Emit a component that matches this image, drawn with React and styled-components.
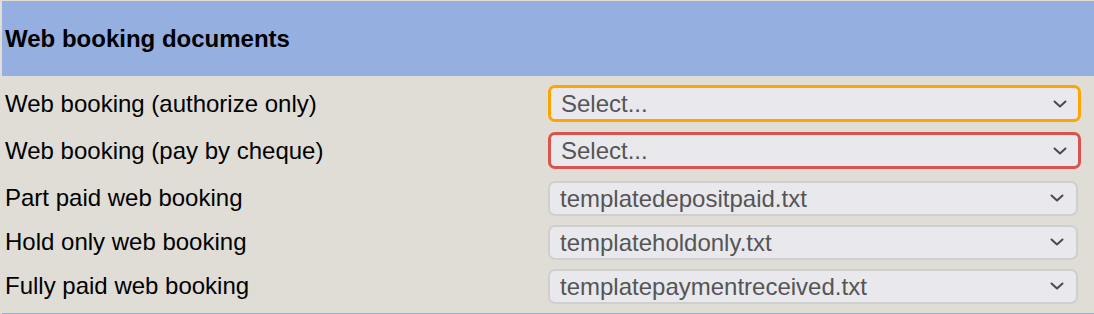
import React from 'react';
import styled, { createGlobalStyle } from 'styled-components';

const GlobalStyle = createGlobalStyle`
body {
    margin: 0;
    background: #dfddd6;
    font-family: "Liberation Sans", Arial, sans-serif;
}
`;

const Page = styled.div`
width: 1094px;
height: 314px;
padding: 1px 0 0 2px;
box-sizing: border-box;
background: #dfddd6;
overflow: hidden;
`;

const Header = styled.div`
height: 75px;
display: flex;
align-items: center;
padding-left: 3px;
background: #95afe0;
font-size: 24px;
font-weight: bold;
color: #000;
`;

const Rows = styled.div`
padding: 4px 0 5px;
`;

const Row = styled.div`
display: grid;
grid-template-columns: 546px 1fr;
align-items: center;
height: ${p => (p.$tall ? '47px' : '44px')};
margin-top: ${p => (p.$shift ? '2px' : '0')};
`;

const Label = styled.label`
padding-left: 3px;
font-size: 24px;
color: #000;
white-space: nowrap;
`;

const SelectWrap = styled.div`
position: relative;
width: ${p => (p.$state ? '533px' : '530px')};
height: ${p => (p.$state ? '37px' : '35px')};
`;

const borderColors = {
    warn: '#ffa500',
    error: '#d9534f',
};

const Select = styled.select`
appearance: none;
-webkit-appearance: none;
width: 100%;
height: 100%;
box-sizing: border-box;
margin: 0;
padding: 0 40px 0 ${p => (p.$state ? '10px' : '10px')};
border: ${p => (p.$state ? `3px solid ${borderColors[p.$state]}` : '2px solid #cfcfcf')};
border-radius: 7px;
background: #e9e8ed;
color: #555;
font-family: "Liberation Sans", Arial, sans-serif;
font-size: 24px;
outline: none;
`;

const Chevron = styled.svg`
position: absolute;
right: 14px;
top: 50%;
margin-top: -4px;
pointer-events: none;
`;

const NextHeader = styled.div`
height: 4px;
background: #95afe0;
`;

const rows = [
    { label: 'Web booking (authorize only)', value: 'Select...', state: 'warn' },
    { label: 'Web booking (pay by cheque)', value: 'Select...', state: 'error' },
    { label: 'Part paid web booking', value: 'templatedepositpaid.txt', shift: true },
    { label: 'Hold only web booking', value: 'templateholdonly.txt' },
    { label: 'Fully paid web booking', value: 'templatepaymentreceived.txt' },
];

const DocSelect = ({ value, state }) => (
    <SelectWrap $state={state}>
        <Select $state={state} defaultValue={value}>
            <option value={value}>{value}</option>
        </Select>
        <Chevron $state={state} width="14" height="8" viewBox="0 0 14 8">
            <path d="M1.5 1.5 L7 6.5 L12.5 1.5" fill="none" stroke="#4a4a4a" strokeWidth="2" strokeLinecap="round" strokeLinejoin="round" />
        </Chevron>
    </SelectWrap>
);

const App = () => {
    return (
        <Page>
            <GlobalStyle />
            <Header>Web booking documents</Header>
            <Rows>
                {rows.map(row => (
                    <Row key={row.label} $tall={!!row.state} $shift={row.shift}>
                        <Label>{row.label}</Label>
                        <DocSelect value={row.value} state={row.state} />
                    </Row>
                ))}
            </Rows>
            <NextHeader />
        </Page>
    );
};

export default App;
